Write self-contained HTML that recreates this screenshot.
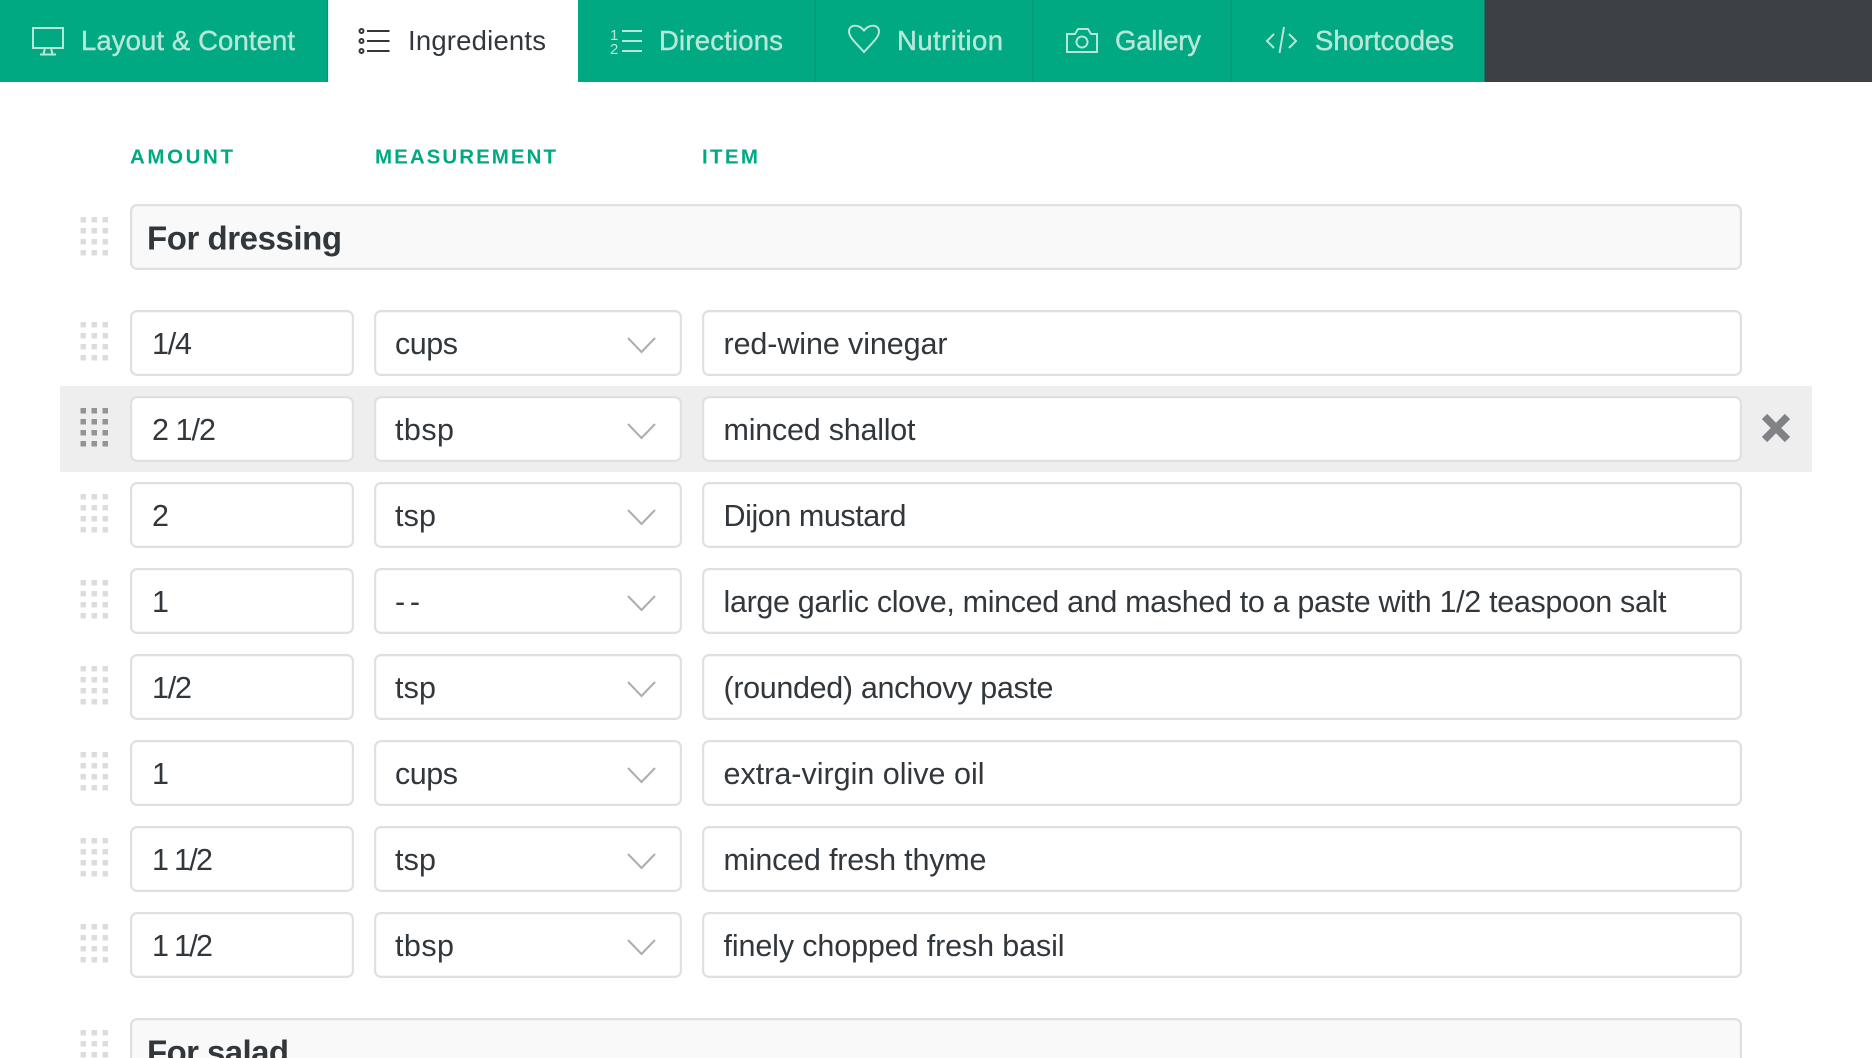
<!DOCTYPE html>
<html lang="en"><head><meta charset="utf-8"><title>Ingredients</title>
<style>
html,body{margin:0;padding:0;background:#fff;width:1872px;height:1058px;overflow:hidden}
svg{display:block}
text{font-family:"Liberation Sans",Arial,sans-serif}
.n{font-size:27.5px;fill:#b8e6d9;stroke:#b8e6d9;stroke-width:.4px}
.l{font-size:20.5px;font-weight:700;fill:#00a981}
.t{font-size:30.5px;fill:#32373c}
.s{font-size:33px;font-weight:700;fill:#32373c}
.b{fill:#fff;stroke:#e0e0e0;stroke-width:2.2}
.h{fill:#f9f9f9;stroke:#e0e0e0;stroke-width:2.2}
.ic{fill:none;stroke:#b8e6d9;stroke-width:2}
</style></head><body>
<svg xmlns="http://www.w3.org/2000/svg" width="1872" height="1058" viewBox="0 0 1872 1058">
<defs>
<g id="g"><path d="M0 0h5.500v5.500H0zM11 0h5.500v5.500H11zM22 0h5.500v5.500H22zM0 11h5.500v5.500H0zM11 11h5.500v5.500H11zM22 11h5.500v5.500H22zM0 22h5.500v5.500H0zM11 22h5.500v5.500H11zM22 22h5.500v5.500H22zM0 33h5.500v5.500H0zM11 33h5.500v5.500H11zM22 33h5.500v5.500H22z"/></g>
<g id="r"><rect class="b" x="131.100" y="1.100" width="221.800" height="63.800" rx="6"/><rect class="b" x="375.100" y="1.100" width="305.800" height="63.800" rx="6"/><rect class="b" x="703.100" y="1.100" width="1037.800" height="63.800" rx="6"/><path d="M628 28l13.500 14L655 28" fill="none" stroke="#adadad" stroke-width="2"/></g>
</defs>
<rect width="1872" height="82" fill="#3d4145"/>
<rect width="1484.500" height="82" fill="#00a981"/>
<rect x="328" width="250" height="82" fill="#fff"/>
<path d="M327.500 0v82M815 0v82M1033 0v82M1231 0v82" stroke="#009772" stroke-width="1.200"/>

<g class="ic">
<path d="M33 28h30v20H33zM45 48l-1.500 6M51 48l1.500 6M40 54.500h16"/>
<path d="M864 52C855 42 849 37 849 31.500c0-7 9.500-8 15-1 5.500-7 15-6 15 1C879 37 873 42 864 52z"/>
<path d="M1067 34h8l3-5h10l3 5h6v18h-30zM1082 36.500a5.500 5.500 0 1 0 .01 0z"/>
<path d="M1274 34l-7 7 7 7M1289 34l7 7-7 7M1284 27l-4.500 26"/>
<path d="M622 31h20M622 41h20M622 51h20"/>
</g>
<text x="610" y="40" font-size="15" fill="#b8e6d9">1</text>
<text x="610" y="54" font-size="15" fill="#b8e6d9">2</text>
<g fill="none" stroke="#32373c" stroke-width="2">
<path d="M367 31h22.500M367 41h22.500M367 51h22.500"/>
<circle cx="361.500" cy="31" r="2"/><circle cx="361.500" cy="41" r="2"/><circle cx="361.500" cy="51" r="2"/>
</g>

<text class="n" x="81" y="50" textLength="214" lengthAdjust="spacing">Layout &amp; Content</text>
<text class="n" x="408" y="50" textLength="138" lengthAdjust="spacing" style="fill:#32373c;stroke:none">Ingredients</text>
<text class="n" x="659" y="50" textLength="124" lengthAdjust="spacing">Directions</text>
<text class="n" x="897" y="50" textLength="106" lengthAdjust="spacing">Nutrition</text>
<text class="n" x="1115" y="50" textLength="86" lengthAdjust="spacing">Gallery</text>
<text class="n" x="1315" y="50" textLength="139" lengthAdjust="spacing">Shortcodes</text>

<text class="l" x="130" y="163.500" textLength="103" lengthAdjust="spacing">AMOUNT</text>
<text class="l" x="375" y="163.500" textLength="181" lengthAdjust="spacing">MEASUREMENT</text>
<text class="l" x="702" y="163.500" textLength="56" lengthAdjust="spacing">ITEM</text>

<rect x="60" y="386" width="1752" height="86" fill="#eeeeee"/>

<rect class="h" x="131.100" y="205.100" width="1609.800" height="63.800" rx="6"/>
<text class="s" x="147" y="249.500" textLength="195" lengthAdjust="spacing">For dressing</text>
<use href="#g" x="80.500" y="217" fill="#dcdcdc"/>

<use href="#g" x="80.500" y="322" fill="#dcdcdc"/><use href="#r" y="310"/>
<use href="#g" x="80.500" y="408" fill="#949494"/><use href="#r" y="396"/>
<use href="#g" x="80.500" y="494" fill="#dcdcdc"/><use href="#r" y="482"/>
<use href="#g" x="80.500" y="580" fill="#dcdcdc"/><use href="#r" y="568"/>
<use href="#g" x="80.500" y="666" fill="#dcdcdc"/><use href="#r" y="654"/>
<use href="#g" x="80.500" y="752" fill="#dcdcdc"/><use href="#r" y="740"/>
<use href="#g" x="80.500" y="838" fill="#dcdcdc"/><use href="#r" y="826"/>
<use href="#g" x="80.500" y="924" fill="#dcdcdc"/><use href="#r" y="912"/>

<path d="M1764.500 416.500l23 23M1787.500 416.500l-23 23" stroke="#808285" stroke-width="7.500" fill="none"/>

<text class="t" x="152" y="354" textLength="40" lengthAdjust="spacing">1/4</text>
<text class="t" x="395" y="354" textLength="63" lengthAdjust="spacing">cups</text>
<text class="t" x="723.500" y="354" textLength="224" lengthAdjust="spacing">red-wine vinegar</text>

<text class="t" x="152" y="440" textLength="64" lengthAdjust="spacing">2 1/2</text>
<text class="t" x="395" y="440" textLength="59" lengthAdjust="spacing">tbsp</text>
<text class="t" x="723.500" y="440" textLength="192" lengthAdjust="spacing">minced shallot</text>

<text class="t" x="152" y="526">2</text>
<text class="t" x="395" y="526" textLength="41" lengthAdjust="spacing">tsp</text>
<text class="t" x="723.500" y="526" textLength="183" lengthAdjust="spacing">Dijon mustard</text>

<text class="t" x="152" y="612">1</text>
<text class="t" x="395" y="612" textLength="25" lengthAdjust="spacing">--</text>
<text class="t" x="723.500" y="612" textLength="943" lengthAdjust="spacing">large garlic clove, minced and mashed to a paste with 1/2 teaspoon salt</text>

<text class="t" x="152" y="698" textLength="40" lengthAdjust="spacing">1/2</text>
<text class="t" x="395" y="698" textLength="41" lengthAdjust="spacing">tsp</text>
<text class="t" x="723.500" y="698" textLength="330" lengthAdjust="spacing">(rounded) anchovy paste</text>

<text class="t" x="152" y="784">1</text>
<text class="t" x="395" y="784" textLength="63" lengthAdjust="spacing">cups</text>
<text class="t" x="723.500" y="784" textLength="261" lengthAdjust="spacing">extra-virgin olive oil</text>

<text class="t" x="152" y="870" textLength="61" lengthAdjust="spacing">1 1/2</text>
<text class="t" x="395" y="870" textLength="41" lengthAdjust="spacing">tsp</text>
<text class="t" x="723.500" y="870" textLength="263" lengthAdjust="spacing">minced fresh thyme</text>

<text class="t" x="152" y="956" textLength="61" lengthAdjust="spacing">1 1/2</text>
<text class="t" x="395" y="956" textLength="59" lengthAdjust="spacing">tbsp</text>
<text class="t" x="723.500" y="956" textLength="341" lengthAdjust="spacing">finely chopped fresh basil</text>

<rect class="h" x="131.100" y="1019.100" width="1609.800" height="63.800" rx="6"/>
<text class="s" x="147" y="1063.500" textLength="142" lengthAdjust="spacing">For salad</text>
<use href="#g" x="80.500" y="1030" fill="#dcdcdc"/>
</svg>
</body></html>
